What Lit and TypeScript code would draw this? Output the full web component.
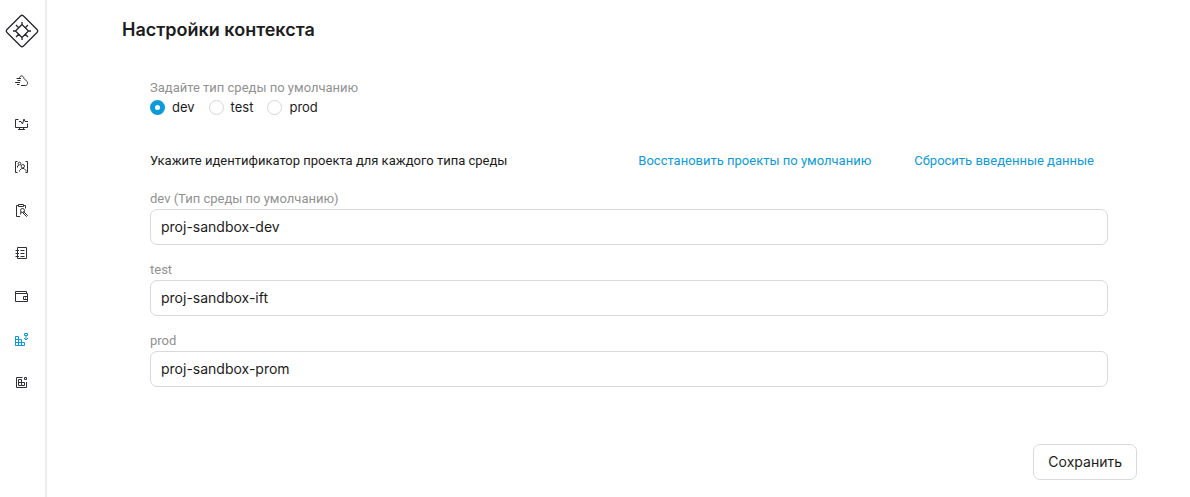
import { LitElement, html, css, svg } from "lit";
import { customElement, state } from "lit/decorators.js";

const icons = [
  { name: "Облако", art: svg`<path d="M5.500 4.500C5.500 1 9.500 1 10 4.500L13 7.500C14.500 9.500 13 11.500 11.500 11.500H7M2.500 4.500H7M3.500 6.500H6.500M1 8.500H6M3 10.500H5.500"/>` },
  { name: "Мониторинг", art: svg`<path d="M4.500 2.500H1.500V10.500H13.500V6.500M5 4.500H7L8.500 7 10 2 11 4.500H14M5.500 10.500V12.500M9.500 10.500V12.500M4 12.500H11"/>` },
  { name: "Пользователи", art: svg`<path d="M3.500 1.500H1.500V12.500H3.500M11.500 1.500H13.500V12.500H11.500M3.500 7.500V6L5 5"/><circle cx="5.500" cy="3.500" r="1.300"/><circle cx="8.800" cy="6.200" r="1.700"/><path d="M5.500 11.500V10.500L7.500 8.500H10L12 10.500V11.500"/>` },
  { name: "Задачи", art: svg`<path d="M4 2.500H2.500V13.500H6M10 2.500H11.500V5.500M4.500 1.500H9.500V3.500H4.500Z"/><circle cx="8.500" cy="7.500" r="2"/><path d="M7 9 6.500 11.500M9.500 8.500 13.500 12.500 12.500 13.500 8.500 9.500"/>` },
  { name: "Журнал", art: svg`<path d="M3.500 1.500H12.500V12.500H3.500ZM1.500 4.500H5M1.500 7.500H5M1.500 10.500H5M6.500 4.500H10.500M6.500 7.500H10.500M6.500 10.500H10.500"/>` },
  { name: "Кошелёк", art: svg`<path d="M12.500 4.500V2.500H1.500V12.500H13.500V4.500H1.500M13.500 7.500H9.500V10.500H13.500M11 9H12"/>` },
  { name: "Контекст", art: svg`<path d="M1.500 4.500H4.500V13.500H1.500ZM1.500 7.500H7.500V13.500H4.500M1.500 10.500H10.500V13.500H1.500M7.500 10.500V13.500M10.500 1.500H13.500V3.500H10.500ZM12 4V8M10 6 12 8 14 6"/>` },
  { name: "Ресурсы", art: svg`<path d="M8.500 2.500H2.500V12.500H12.500V7M4.500 4.500H7.500V10.500H4.500ZM4.500 7.500H10.500V10.500H7.500M10.500 2.500H12.500V4.500H10.500Z"/>` },
];

@customElement("app-root")
export class AppRoot extends LitElement {
  static styles = css`
    :host {
      display: flex;
      min-height: 100vh;
      background: #fff;
      color: #1c1c20;
      font: 13px/20px Inter, "Noto Sans", sans-serif;
    }
    * { box-sizing: border-box; }
    .side {
      flex: none;
      width: 47px;
      border-right: 2px solid #ededed;
    }
    .logo { display: block; width: 34px; height: 34px; margin: 14px 5px 12px; }
    .menu { display: flex; flex-direction: column; margin: 0; padding: 0; list-style: none; }
    .item { display: flex; align-items: center; justify-content: center; height: 43px; padding-right: 2px; color: #303034; }
    .active { color: #0c9ada; }
    .icon { display: block; width: 15px; height: 15px; fill: none; stroke: currentColor; }
    .main { flex: 1; min-width: 0; padding: 18px 53px 16px 75px; }
    .title { margin: 0; font-size: 18px; line-height: 24px; font-weight: 600; }
    .form { margin: 36px 29px 0 28px; }
    .group { margin: 0; padding: 0; border: 0; }
    .caption { display: block; padding: 0; color: #919191; line-height: 20px; }
    .caption, .bar { font-family: Roboto, "Noto Sans", sans-serif; }
    .radios { display: flex; gap: 14px; line-height: 18px; }
    .radio { display: flex; align-items: center; gap: 7px; }
    .dot {
      appearance: none;
      width: 15px;
      height: 15px;
      margin: 0;
      border: 1px solid #d6d6d6;
      border-radius: 50%;
      background: #fff;
    }
    .dot:checked { border: 5px solid #0c9ada; }
    .bar { display: flex; align-items: center; margin: 35px 14px 18px 0; }
    .hint { flex: 1; }
    .link { margin-left: 43px; color: #0c9ada; text-decoration: none; }
    .fields { display: flex; flex-direction: column; gap: 15px; }
    .text {
      display: block;
      width: 100%;
      height: 36px;
      padding: 0 10px 1px;
      border: 1px solid #d9d9d9;
      border-radius: 7px;
      background: #fff;
      color: inherit;
      font: inherit;
      font-size: 14px;
    }
    .actions { display: flex; justify-content: flex-end; margin-top: 57px; }
    .save {
      height: 36px;
      padding: 0 14px;
      border: 1px solid #d9d9d9;
      border-radius: 7px;
      background: #fff;
      color: inherit;
      font: inherit;
      font-size: 14px;
    }
  `;

  @state() private env = "dev";

  private projects = [
    { id: "dev", label: "dev (Тип среды по умолчанию)", value: "proj-sandbox-dev" },
    { id: "test", label: "test", value: "proj-sandbox-ift" },
    { id: "prod", label: "prod", value: "proj-sandbox-prom" },
  ];

  render() {
    return html`
      <nav class="side">
        <svg class="logo" viewBox="0 0 34 34" fill="none" stroke="#26262c" stroke-width="1.3">
          <path d="M15.5 2Q17 .6 18.500 2L32 15.500Q33.400 17 32 18.500L18.500 32Q17 33.400 15.500 32L2 18.500Q.6 17 2 15.500Z" />
          <path d="M17 10.500 23.500 17 17 23.500 10.500 17ZM17 8V11M17 23V26M8 17H11M23 17H26M11 11 13.700 13.700M23 11 20.300 13.700M11 23 13.700 20.300M23 23 20.300 20.300" />
        </svg>
        <ul class="menu">
          ${icons.map((icon) => html`
            <li>
              <a class="item ${icon.name === "Контекст" ? "active" : ""}" href="#" aria-label=${icon.name}>
                <svg class="icon" viewBox="0 0 15 15">${icon.art}</svg>
              </a>
            </li>`)}
        </ul>
      </nav>
      <main class="main">
        <h1 class="title">Настройки контекста</h1>
        <div class="form">
          <fieldset class="group">
            <legend class="caption">Задайте тип среды по умолчанию</legend>
            <div class="radios">
              ${["dev", "test", "prod"].map((env) => html`
                <label class="radio">
                  <input class="dot" type="radio" name="env" .checked=${this.env === env} @change=${() => (this.env = env)} />
                  ${env}
                </label>`)}
            </div>
          </fieldset>
          <div class="bar">
            <span class="hint">Укажите идентификатор проекта для каждого типа среды</span>
            <a class="link" href="#">Восстановить проекты по умолчанию</a>
            <a class="link" href="#">Сбросить введенные данные</a>
          </div>
          <div class="fields">
            ${this.projects.map((p) => html`
              <div>
                <label class="caption" for=${p.id}>${p.label}</label>
                <input class="text" id=${p.id} type="text" .value=${p.value} />
              </div>`)}
          </div>
        </div>
        <div class="actions"><button class="save" type="button">Сохранить</button></div>
      </main>
    `;
  }
}
